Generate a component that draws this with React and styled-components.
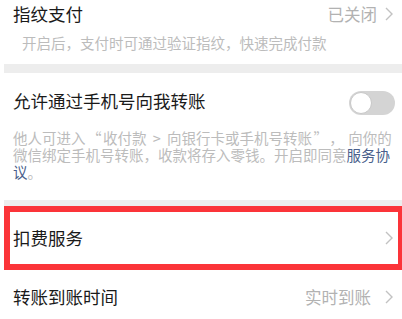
import React from 'react'
import styled, { createGlobalStyle } from 'styled-components'

const Global = createGlobalStyle`
  html, body {
    margin: 0;
    padding: 0;
    background: #fff;
    overflow: hidden;
  }
  body {
    font-family: "Noto Sans CJK SC", "Noto Sans", sans-serif;
    color: #1a1a1a;
  }
`

const Page = styled.div`
  margin-left: 4px;
  width: 398px;
  background: #fff;
`

const Section = styled.div`
  padding: ${props => props.pad || '0 9px'};
`

const TitleRow = styled.div`
  display: flex;
  align-items: center;
  justify-content: space-between;
  height: ${props => props.h || 28}px;
`

const Title = styled.span`
  font-size: 17.5px;
  line-height: 1;
  color: #1a1a1a;
`

const Side = styled.span`
  display: flex;
  align-items: center;
  gap: ${props => props.gap || 8}px;
  font-size: 16.5px;
  color: #b2b2b2;
`

const Desc = styled.p`
  margin: ${props => props.m || '0'};
  padding-left: ${props => props.indent || 0}px;
  font-size: 14.5px;
  line-height: ${props => props.lh || 20}px;
  word-spacing: 3px;
  color: #bcbcbc;
`

// full-width CJK punctuation cell
const Quote = styled.span`
  display: inline-block;
  width: ${props => props.w || 1.2}em;
  text-align: ${props => props.align || 'center'};
`

const Link = styled.span`
  color: #4a5f8c;
`

const Band = styled.div`
  height: ${props => props.h}px;
  background: #ededed;
`

const Row = styled.div`
  display: flex;
  align-items: center;
  justify-content: space-between;
  height: ${props => props.h}px;
  box-sizing: border-box;
  padding: 0 9px;
`

const HighlightRow = styled(Row)`
  border: solid #fb3439;
  border-width: 6px 4px 6px 6px;
  padding: 0 5px 0 3px;
`

const Switch = styled.div`
  width: 46px;
  height: 24px;
  border-radius: 12px;
  background: #d4d4d4;
  position: relative;
  margin-top: 4px;
  margin-right: -2px;
`

const Knob = styled.div`
  position: absolute;
  left: 1px;
  top: 1px;
  width: 22px;
  height: 22px;
  box-sizing: border-box;
  border-radius: 50%;
  background: #fff;
  border: 1px solid #c8c8c8;
`

const Chevron = () => (
  <svg width="8" height="14" viewBox="0 0 8 14" fill="none">
    <path d="M1 1l6 6-6 6" stroke="#c2c2c2" strokeWidth="1.4" />
  </svg>
)

export default function App() {
  return (
    <>
      <Global />
      <Page>
        <Section pad="0 9px 11px">
          <TitleRow h={28}>
            <Title>指纹支付</Title>
            <Side gap={8}>
              已关闭
              <Chevron />
            </Side>
          </TitleRow>
          <Desc indent={9} m="5px 0 0">
            开启后，支付时可通过验证指纹，快速完成付款
          </Desc>
        </Section>
        <Band h={9} />
        <Section pad="16px 9px 20px">
          <TitleRow h={24}>
            <Title>允许通过手机号向我转账</Title>
            <Switch>
              <Knob />
            </Switch>
          </TitleRow>
          <Desc m="16px 0 0" lh={17}>
            他人可进入<Quote>“</Quote>收付款 &gt; 向银行卡或手机号转账<Quote>”</Quote><Quote w={1.3} align="left">，</Quote>向你的微信绑定手机号转账，收款将存入零钱。开启即同意
            <Link>服务协议</Link>。
          </Desc>
        </Section>
        <Band h={6} />
        <HighlightRow h={64}>
          <Title>扣费服务</Title>
          <Chevron />
        </HighlightRow>
        <Row h={54}>
          <Title>转账到账时间</Title>
          <Side gap={14}>
            实时到账
            <Chevron />
          </Side>
        </Row>
      </Page>
    </>
  )
}
